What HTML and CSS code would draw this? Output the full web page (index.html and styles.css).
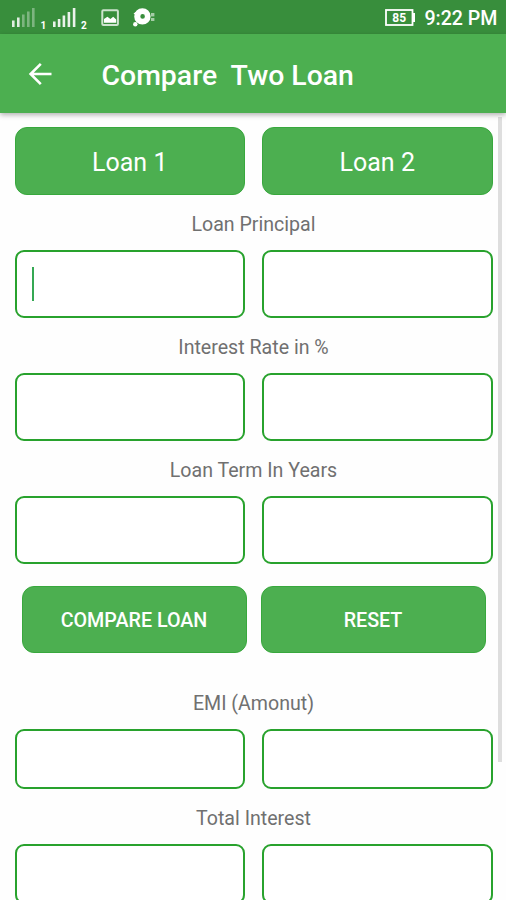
FILE: index.html
```html
<!DOCTYPE html>
<html lang="en">
<head>
    <meta charset="UTF-8">
    <meta name="viewport" content="width=device-width, initial-scale=1.0">
    <title>Compare Two Loan</title>
    <link rel="stylesheet" href="styles.css">
</head>
<body>
    <div class="status-bar">
        <svg class="status-icons" width="160" height="34" viewBox="0 0 160 34" fill="#fff">
            <!-- signal 1 -->
            <g opacity="0.85">
                <rect x="12" y="20.5" width="2.6" height="6.5"/>
                <rect x="17" y="17.5" width="2.6" height="9.5"/>
            </g>
            <g opacity="0.35">
                <rect x="22" y="14.5" width="2.6" height="12.5"/>
                <rect x="27" y="11.5" width="2.6" height="15.5"/>
                <rect x="32" y="8" width="2.6" height="19"/>
            </g>
            <text class="sim" x="40.5" y="28.8">1</text>
            <!-- signal 2 -->
            <g opacity="0.9">
                <rect x="53" y="21.5" width="2.6" height="5.5"/>
                <rect x="57.8" y="19" width="2.6" height="8"/>
                <rect x="62.6" y="15.5" width="2.6" height="11.5"/>
                <rect x="67.6" y="12" width="2.6" height="15"/>
                <rect x="72.8" y="8" width="2.6" height="19"/>
            </g>
            <text class="sim" x="81" y="28.8">2</text>
            <!-- picture -->
            <rect x="102.3" y="10.3" width="15.6" height="14.6" rx="1" fill="none" stroke="#fff" stroke-width="2" opacity="0.75"/>
            <path d="M104 22.8v-3.8l3.4-2.3 3 2.3 2.8-2.2 3 2.6v3.4z"/>
            <!-- disc -->
            <path fill-rule="evenodd" d="M142.4 8.2a8.2 8.2 0 1 0 0 16.4 8.2 8.2 0 0 0 0-16.4zm.2 5.9a2.3 2.3 0 1 1 0 4.6 2.3 2.3 0 0 1 0-4.6z"/>
            <circle cx="135.3" cy="24.3" r="2.2"/>
            <path d="M133.5 13.5l3-2v4z"/>
            <rect x="151" y="13" width="3.4" height="3.4" opacity="0.55"/>
            <rect x="151" y="18" width="3.4" height="3" opacity="0.55"/>
        </svg>
        <div class="status-right">
            <svg width="30" height="18" viewBox="0 0 30 18">
                <rect x="1" y="1" width="26.5" height="15" fill="none" stroke="#fff" stroke-width="1.8"/>
                <rect x="28" y="4" width="2" height="9" fill="#fff"/>
                <text class="battery" x="14.2" y="13">85</text>
            </svg>
            <span class="clock">9:22 PM</span>
        </div>
    </div>

    <header class="app-bar">
        <svg class="back" width="24" height="24" viewBox="0 0 24 24" fill="none" stroke="#fff" stroke-width="2.6">
            <path d="M23.5 12H2.5M12.8 1.8L2.6 12l10.2 10.2"/>
        </svg>
        <h1 class="title">Compare  Two Loan</h1>
    </header>

    <main class="content">
        <div class="row">
            <div class="button heading">Loan 1</div>
            <div class="button heading">Loan 2</div>
        </div>

        <div class="label">Loan Principal</div>
        <div class="row">
            <div class="field"><span class="caret"></span></div>
            <div class="field"></div>
        </div>

        <div class="label">Interest Rate in %</div>
        <div class="row">
            <div class="field"></div>
            <div class="field"></div>
        </div>

        <div class="label">Loan Term In Years</div>
        <div class="row">
            <div class="field"></div>
            <div class="field"></div>
        </div>

        <div class="row actions">
            <div class="button action">COMPARE LOAN</div>
            <div class="button action">RESET</div>
        </div>

        <div class="label">EMI (Amonut)</div>
        <div class="row">
            <div class="field result"></div>
            <div class="field result"></div>
        </div>

        <div class="label">Total Interest</div>
        <div class="row">
            <div class="field result"></div>
            <div class="field result"></div>
        </div>

        <div class="scrollbar"></div>
    </main>
</body>
</html>
```
FILE: styles.css
```css
:root {
    --green: #4caf50;
    --green-dark: #388e3c;
    --green-border: #28a22d;
    --text: #707070;
}

* {
    box-sizing: border-box;
}

body {
    margin: 0;
    height: 100vh;
    display: flex;
    flex-direction: column;
    overflow: hidden;
    background: #fefefe;
    font-family: Roboto, "Liberation Sans", sans-serif;
}

.status-bar {
    flex: none;
    height: 34px;
    padding-right: 8.5px;
    display: flex;
    justify-content: space-between;
    background: var(--green-dark);
    color: #fff;
}

.sim {
    font-size: 10px;
    font-weight: 700;
}

.battery {
    font-size: 12px;
    font-weight: 700;
    fill: #fff;
    text-anchor: middle;
}

.status-right {
    display: flex;
    align-items: center;
    gap: 9px;
    padding-top: 1px;
}

.clock {
    padding-top: 2px;
    font-size: 19.6px;
    font-weight: 500;
    line-height: 34px;
}

.app-bar {
    flex: none;
    height: 79px;
    padding-left: 27.5px;
    display: flex;
    align-items: center;
    gap: 50px;
    background: var(--green);
    box-shadow: 0 2px 5px rgba(0, 0, 0, 0.3);
    position: relative;
    z-index: 1;
}

.title {
    margin: 3px 0 0;
    color: #fff;
    font-size: 28.4px;
    font-weight: 500;
    white-space: pre;
}

.content {
    flex: 1;
    min-height: 0;
    padding: 14px 13.5px 0 14.5px;
    overflow: hidden;
    position: relative;
}

.row {
    display: flex;
    gap: 17px;
}

.button {
    flex: 1;
    height: 68px;
    display: flex;
    align-items: center;
    justify-content: center;
    border: 1px solid #38a83d;
    border-radius: 12px;
    background: var(--green);
    color: #fff;
}

.heading {
    padding-top: 3px;
    font-size: 25px;
}

.label {
    height: 55px;
    line-height: 59px;
    text-align: center;
    font-size: 19.6px;
    color: var(--text);
}

.field {
    flex: 1;
    height: 68px;
    padding: 15px 15.5px;
    border: 2px solid var(--green-border);
    border-radius: 9px;
    background: #fff;
}

.caret {
    display: block;
    width: 2px;
    height: 34px;
    background: #35a853;
}

.actions {
    gap: 14px;
    margin: 22px 0 21px;
    padding: 0 7px;
}

.action {
    height: 67px;
    padding-top: 1px;
    font-size: 19.7px;
    font-weight: 500;
}

.result {
    height: 60px;
}

/* scroll thumb over the right edge of the list */
.scrollbar {
    position: absolute;
    top: 4px;
    right: 4px;
    width: 4px;
    height: 645px;
    background: #dedede;
}
```
